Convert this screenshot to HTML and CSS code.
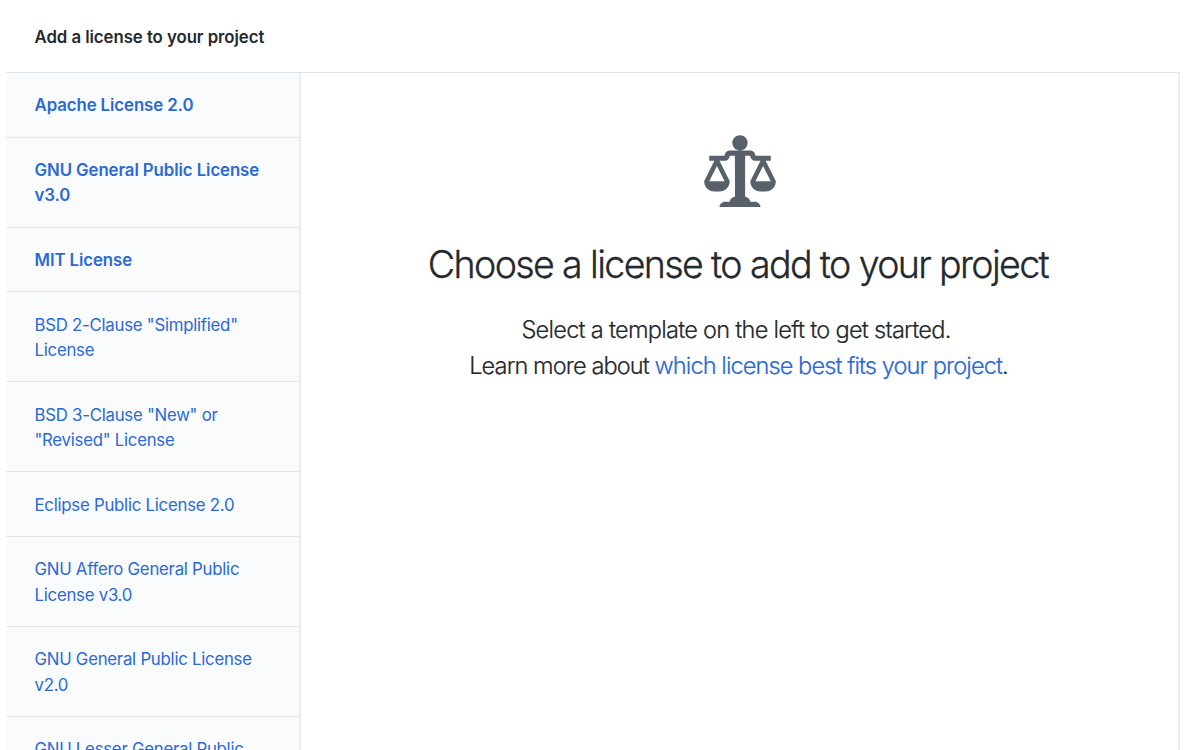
FILE: index.html
```html
<!DOCTYPE html>
<html lang="en">
<head>
  <meta charset="UTF-8">
  <title>Add a license to your project</title>
  <link rel="stylesheet" href="styles.css">
</head>
<body>

  <header class="page-header">
    <h1 class="page-title">Add a license to your project</h1>
  </header>

  <main class="content">
    <!-- License list -->
    <nav class="menu">
      <a href="#" class="menu-item featured">Apache License 2.0</a>
      <a href="#" class="menu-item featured">GNU General Public License v3.0</a>
      <a href="#" class="menu-item featured">MIT License</a>
      <a href="#" class="menu-item">BSD 2-Clause "Simplified" License</a>
      <a href="#" class="menu-item">BSD 3-Clause "New" or "Revised" License</a>
      <a href="#" class="menu-item">Eclipse Public License 2.0</a>
      <a href="#" class="menu-item">GNU Affero General Public License v3.0</a>
      <a href="#" class="menu-item">GNU General Public License v2.0</a>
      <a href="#" class="menu-item">GNU Lesser General Public License v2.1</a>
    </nav>

    <!-- Empty state -->
    <section class="blankslate">
      <svg class="icon" viewBox="0 0 14 16" aria-hidden="true"><path fill-rule="evenodd" d="M7 4c-.83 0-1.5-.67-1.5-1.5S6.17 1 7 1s1.5.67 1.5 1.5S7.83 4 7 4zm7 6c0 1.11-.89 2-2 2h-1c-1.11 0-2-.89-2-2l2-4h-1c-.55 0-1-.45-1-1H8v8c.42 0 1 .45 1 1h1c.42 0 1 .45 1 1H3c0-.55.58-1 1-1h1c0-.55.58-1 1-1h.03L6 5H5c0 .55-.45 1-1 1H3l2 4c0 1.11-.89 2-2 2H2c-1.11 0-2-.89-2-2l2-4H1V5h3c0-.55.45-1 1-1h4c.55 0 1 .45 1 1h3v1h-1l2 4zM2.5 7L1 10h3L2.5 7zM13 10l-1.5-3-1.5 3h3z"/></svg>
      <h2 class="blankslate-title">Choose a license to add to your project</h2>
      <p class="blankslate-text"><span class="lead">Select a template on the left to get started.</span><br>
      Learn more about <a href="#">which license best fits your project</a>.</p>
    </section>
  </main>

</body>
</html>
```
FILE: styles.css
```css
body {
  font-family: Inter, "Liberation Sans", sans-serif;
  font-size: 16.8px;
  line-height: 25.2px;
  color: #24292e;
  background: #fff;
  margin: 0;
  height: 750px;
  overflow: hidden;
  display: flex;
  flex-direction: column;
}
a {
  color: #2a69d6;
  text-decoration: none;
}
.page-header {
  height: 46.8px;
  padding: 25px 34.5px 0;
}
.page-title {
  font-size: 16.8px;
  font-weight: 600;
  letter-spacing: -0.05px;
  margin: 0;
}
.content {
  display: flex;
  flex: 1;
  min-height: 0;
  margin: 0 20px 0 6px;
  border-top: 1px solid #e1e4e8;
  border-right: 2px solid #eaecef;
}
.menu {
  box-sizing: border-box;
  width: 295px;
  flex-shrink: 0;
  overflow: hidden;
  background: #fafbfd;
  border-right: 2px solid #eaecef;
}
.menu-item {
  display: block;
  padding: 20.3px 28px 18.3px 28.5px;
  border-bottom: 1px solid #e1e4e8;
  letter-spacing: -0.25px;
}
.featured {
  font-weight: 600;
  letter-spacing: -0.08px;
}
.blankslate {
  flex: 1;
  padding-top: 57px;
  text-align: center;
}
.icon {
  display: block;
  width: 72px;
  height: 82px;
  margin: 0 auto;
  fill: #586069;
}
.blankslate-title {
  font-size: 37.6px;
  font-weight: 300;
  line-height: 58px;
  letter-spacing: -1.64px;
  -webkit-text-stroke: 0.3px;
  margin: 24px 3px 0 0;
}
.blankslate-text {
  font-size: 23.6px;
  font-weight: 300;
  line-height: 36px;
  letter-spacing: -0.93px;
  -webkit-text-stroke: 0.2px;
  margin: 18px 2px 0 0;
}
.lead {
  padding-right: 5px;
  letter-spacing: -0.75px;
}
```
